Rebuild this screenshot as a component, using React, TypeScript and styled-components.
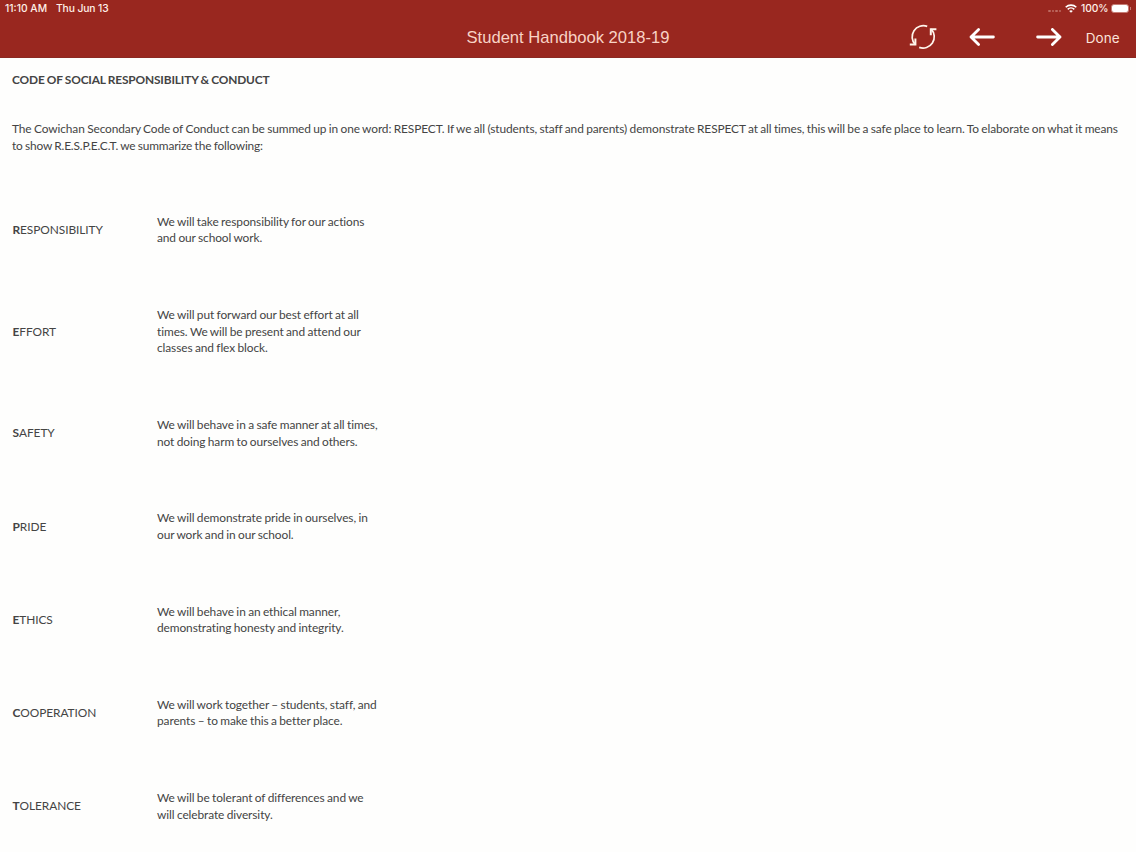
import styled, { createGlobalStyle } from "styled-components";

type Rule = {
  word: string;
  text: string;
}

const rules: Rule[] = [
  { word: "RESPONSIBILITY", text: "We will take responsibility for our actions\nand our school work." },
  { word: "EFFORT", text: "We will put forward our best effort at all\ntimes. We will be present and attend our\nclasses and flex block." },
  { word: "SAFETY", text: "We will behave in a safe manner at all times,\nnot doing harm to ourselves and others." },
  { word: "PRIDE", text: "We will demonstrate pride in ourselves, in\nour work and in our school." },
  { word: "ETHICS", text: "We will behave in an ethical manner,\ndemonstrating honesty and integrity." },
  { word: "COOPERATION", text: "We will work together – students, staff, and\nparents – to make this a better place." },
  { word: "TOLERANCE", text: "We will be tolerant of differences and we\nwill celebrate diversity." },
];

const RefreshIcon = () => (
  <svg width="28" height="28" viewBox="0 0 28 28" fill="none" stroke="#fff5ec" strokeWidth="1.7">
    <path d="M18.2 3.4A11.2 11.2 0 0 0 6.2 21.6" />
    <path d="M10.2 24.4A11.2 11.2 0 0 0 22.2 6.2" />
    <path d="M0.8 21.4L6.4 21.4L6.4 15.6" strokeWidth="2" />
    <path d="M27.4 6.2L21.8 6.2L21.8 12.2" strokeWidth="2" />
  </svg>
);

const ArrowIcon = () => (
  <svg width="26" height="20" viewBox="0 0 26 20" fill="none" stroke="#fff" strokeWidth="2.8" strokeLinecap="round" strokeLinejoin="round">
    <path d="M2 10H24.4M9.6 2.4L2 10L9.6 17.6" />
  </svg>
);

const WifiIcon = () => (
  <svg width="12" height="9" viewBox="0 0 12 9" fill="none" stroke="#fff" strokeWidth="1.6">
    <path d="M0.7 3.3A7.5 7.5 0 0 1 11.3 3.3" />
    <path d="M2.7 5.4A4.7 4.7 0 0 1 9.3 5.4" />
    <path d="M6 8.8L4.2 7A2.6 2.6 0 0 1 7.8 7Z" fill="#fff" stroke="none" />
  </svg>
);

export default function App() {
  return (
    <>
      <GlobalStyle />
      <Header>
        <StatusBar>
          <Clock>11:10 AM</Clock>
          <Today>Thu Jun 13</Today>
          <Signal><i /><i /><i /><i /></Signal>
          <WifiIcon />
          <Percent>100%</Percent>
          <Battery />
        </StatusBar>
        <NavBar>
          <Title>Student Handbook 2018-19</Title>
          <Actions>
            <IconButton aria-label="Reload" $width={28}><RefreshIcon /></IconButton>
            <IconButton aria-label="Back" $width={26} $gap={32}><ArrowIcon /></IconButton>
            <IconButton aria-label="Forward" $width={26} $gap={41} $flip><ArrowIcon /></IconButton>
            <DoneButton>Done</DoneButton>
          </Actions>
        </NavBar>
      </Header>
      <Content>
        <Heading>CODE OF SOCIAL RESPONSIBILITY &amp; CONDUCT</Heading>
        <Intro>
          <Line>The Cowichan Secondary Code of Conduct can be summed up in one word: RESPECT. If we all (students, staff and parents) demonstrate RESPECT at all times, this will be a safe place to learn. To elaborate on what it means</Line>
          <Line $tight>to show R.E.S.P.E.C.T. we summarize the following:</Line>
        </Intro>
        {rules.map((rule) => (
          <Row key={rule.word}>
            <Word><b>{rule.word[0]}</b>{rule.word.slice(1)}</Word>
            <Text>{rule.text}</Text>
          </Row>
        ))}
      </Content>
    </>
  )
}

const GlobalStyle = createGlobalStyle`
  * {
    box-sizing: border-box;
  }
  body {
    margin: 0;
    height: 852px;
    overflow: hidden;
    background: #fefefd;
  }
`

const Header = styled.header`
  height: 58px;
  background: #99271f;
  border-bottom: 1px solid #8b2922;
  color: #fff;
  font-family: Inter, "Liberation Sans", sans-serif;
`

const StatusBar = styled.div`
  display: flex;
  align-items: center;
  height: 16px;
  padding: 0 5px 0 5px;
  font-size: 10.3px;
  font-weight: 500;
  line-height: 16px;
  white-space: nowrap;
  color: #fff0e8;
`

const Clock = styled.span`
  width: 51px;
`

const Today = styled.span`
  letter-spacing: -0.1px;
`

const Signal = styled.span`
  display: flex;
  column-gap: 1px;
  margin: 6px 4px 0 auto;

  &>i {
    width: 2.5px;
    height: 1.5px;
    border-radius: 1px;
    background: #bd6a60;
  }
`

const Percent = styled.span`
  width: 27px;
  margin: 0 3px 0 4px;
  letter-spacing: -0.1px;
`

const Battery = styled.span`
  position: relative;
  width: 18px;
  height: 9px;
  margin-right: 2px;
  border: 1px solid #c67b73;
  border-radius: 3px;
  background: #fff;

  &::after {
    content: "";
    position: absolute;
    top: 2px;
    right: -3px;
    width: 1px;
    height: 3px;
    background: #c67b73;
  }
`

const NavBar = styled.nav`
  display: grid;
  grid-template-columns: 1fr auto 1fr;
  align-items: center;
  height: 42px;
`

const Title = styled.h1`
  grid-column: 2;
  margin: 1px 0 0;
  font-family: "Liberation Sans", sans-serif;
  font-size: 16.6px;
  font-weight: 400;
  line-height: 20px;
  color: #f8d3c6;
`

const Actions = styled.div`
  display: flex;
  align-items: center;
  justify-content: flex-end;
  padding-right: 16.5px;
`

const IconButton = styled.button<{ $width: number; $gap?: number; $flip?: boolean }>`
  display: flex;
  align-items: center;
  width: ${({ $width }) => $width}px;
  height: 28px;
  margin: 0 0 0 ${({ $gap }) => $gap ?? 0}px;
  padding: 0;
  border: 0;
  background: none;
  transform: ${({ $flip }) => ($flip ? "scaleX(-1)" : "none")};
`

const DoneButton = styled.button`
  margin: 2px 0 0 24px;
  padding: 0;
  border: 0;
  background: none;
  font-family: Inter, "Liberation Sans", sans-serif;
  font-size: 13.5px;
  line-height: 20px;
  color: #fbe3da;
`

const Content = styled.main`
  padding: 13.5px 12px 0;
  font-family: Lato, "Liberation Sans", sans-serif;
  font-size: 11.9px;
  font-variant-ligatures: no-common-ligatures;
  line-height: 16.67px;
  letter-spacing: -0.09px;
  word-spacing: -0.5px;
  color: #444;
`

const Heading = styled.h2`
  margin: 0 0 33.3px;
  font-size: 11.9px;
  font-weight: 700;
  letter-spacing: -0.15px;
`

const Intro = styled.p`
  margin: 0 0 28.9px;
  white-space: nowrap;
`

const Line = styled.span<{ $tight?: boolean }>`
  display: block;
  letter-spacing: ${({ $tight }) => ($tight ? "-0.17px" : "-0.1px")};
`

const Row = styled.section`
  display: grid;
  grid-template-columns: 145px 1fr;
  align-items: center;
  padding: 30px 0 29.95px;
`

const Word = styled.div`
  padding-left: 0.5px;
  letter-spacing: -0.07px;
`

const Text = styled.p`
  margin: 0;
  white-space: pre;
`
